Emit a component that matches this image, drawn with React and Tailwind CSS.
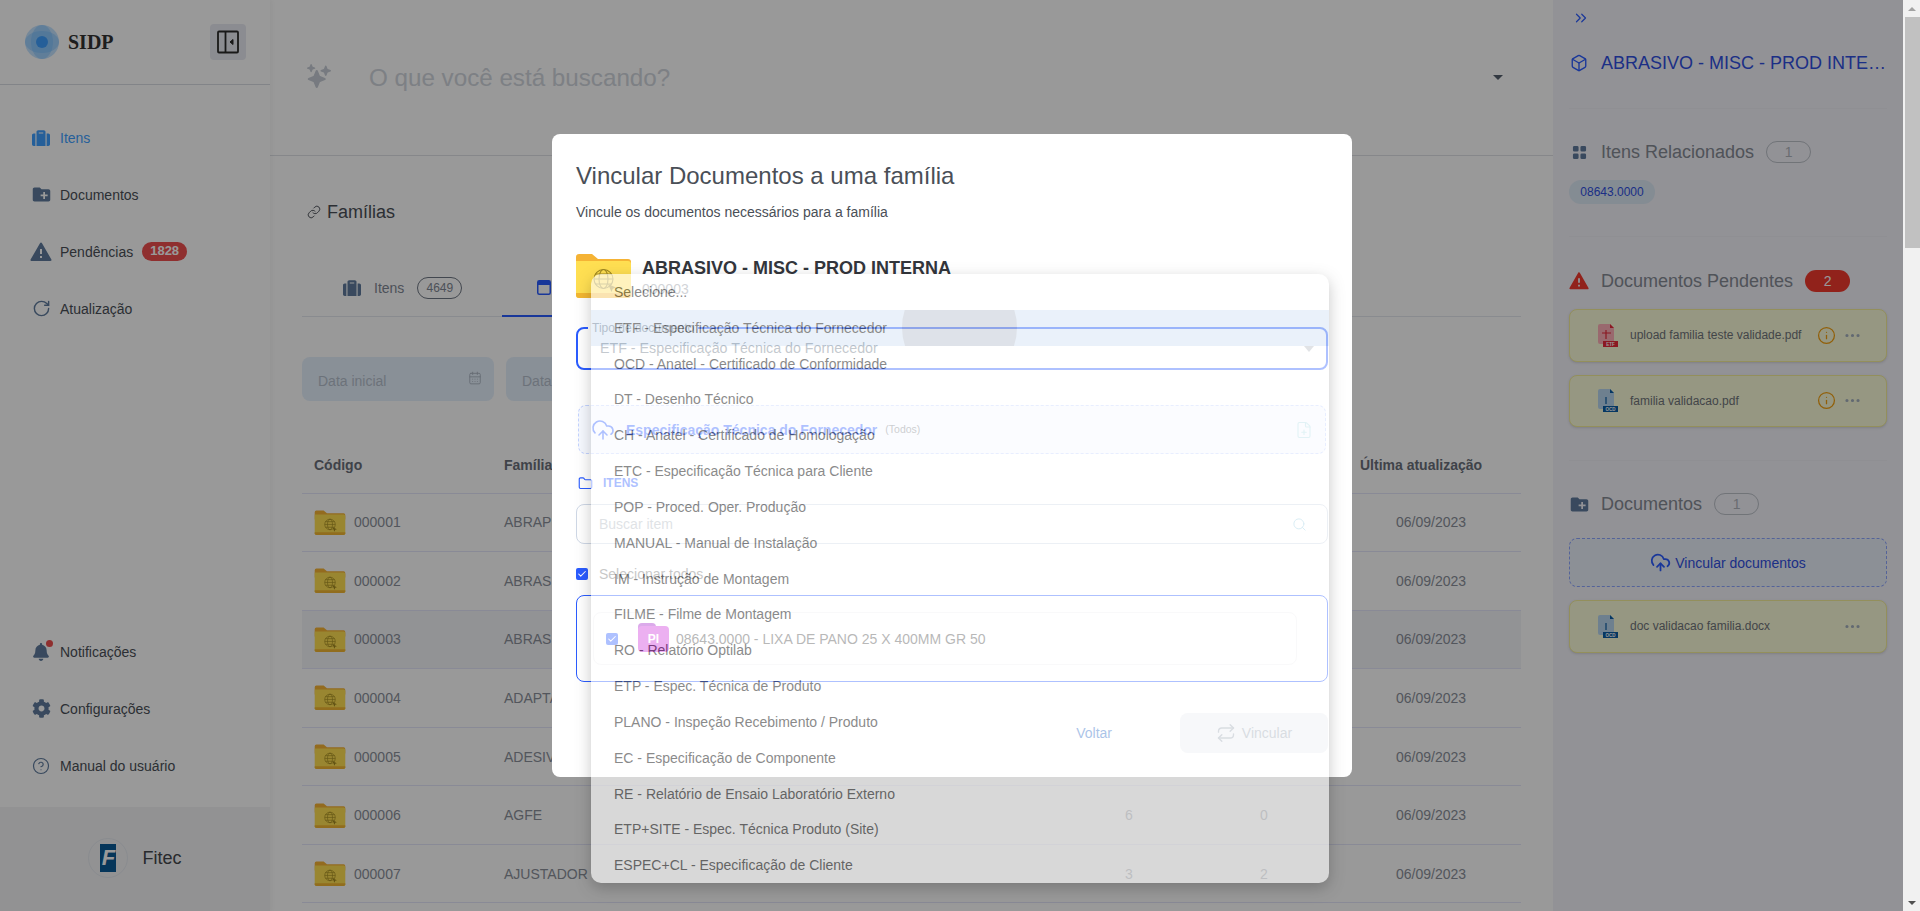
import {
  Box, Check, ChevronsRight, CircleHelp, CloudUpload, Ellipsis, FilePlus, Folder, Info, Link, Repeat, RotateCw, Search, CalendarDays,
} from "lucide-react";
import { FaBell, FaCog, FaSuitcase } from "react-icons/fa";
import { BsGridFill } from "react-icons/bs";
import { IoSparkles } from "react-icons/io5";
import { MdCreateNewFolder } from "react-icons/md";
import { RiAlertFill } from "react-icons/ri";

const rows = [
  ["000001", "ABRAPLAC", "4", "1"],
  ["000002", "ABRASIVO", "2", "0"],
  ["000003", "ABRASIVO - MISC - PROD INTERNA", "1", "1"],
  ["000004", "ADAPTADOR", "8", "3"],
  ["000005", "ADESIVO", "5", "1"],
  ["000006", "AGFE", "6", "0"],
  ["000007", "AJUSTADOR", "3", "2"],
];

const options = [
  "Selecione...",
  "ETF - Especificação Técnica do Fornecedor",
  "OCD - Anatel - Certificado de Conformidade",
  "DT - Desenho Técnico",
  "CH - Anatel - Certificado de Homologação",
  "ETC - Especificação Técnica para Cliente",
  "POP - Proced. Oper. Produção",
  "MANUAL - Manual de Instalação",
  "IM - Instrução de Montagem",
  "FILME - Filme de Montagem",
  "RO - Relatório Optilab",
  "ETP - Espec. Técnica de Produto",
  "PLANO - Inspeção Recebimento / Produto",
  "EC - Especificação de Componente",
  "RE - Relatório de Ensaio Laboratório Externo",
  "ETP+SITE - Espec. Técnica Produto (Site)",
  "ESPEC+CL - Especificação de Cliente",
];

function YellowFolder({ className }) {
  return (
    <svg viewBox="0 0 55 45" className={className}>
      <path d="M0 4a3 3 0 0 1 3-3h13l6 5h30a3 3 0 0 1 3 3v8H0z" fill="#f5b335" />
      <path d="M0 8h52a3 3 0 0 1 3 3v31a3 3 0 0 1-3 3H3a3 3 0 0 1-3-3z" fill="#ffdf52" />
      <path d="M0 40h55v2a3 3 0 0 1-3 3H3a3 3 0 0 1-3-3z" fill="#f2b632" />
      <g fill="none" stroke="#a08820" strokeWidth="1.1">
        <circle cx="27.5" cy="26" r="9.5" />
        <ellipse cx="27.5" cy="26" rx="4.5" ry="9.5" />
        <path d="M18 26h19M19 21h17M19 31h17" />
      </g>
      <path d="M32 31l8 3.5-3.2 1.2L35.5 39z" fill="#a08820" />
    </svg>
  );
}

function DocIcon({ page, tag, label, mark }) {
  return (
    <svg viewBox="0 0 20 23" className="w-5 h-[23px] shrink-0">
      <path d="M2 0h10l4 4v16H2a2 2 0 0 1-2-2V2a2 2 0 0 1 2-2z" fill={page} />
      <path d="M12 0l4 4h-4z" fill={tag} />
      <path d={mark} stroke={tag} strokeWidth="1.2" fill="none" />
      <rect x="5" y="17" width="15" height="6" fill={tag} />
      <text x="12.5" y="22" textAnchor="middle" fontSize="4.5" fontWeight="700" fill="#fff">{label}</text>
    </svg>
  );
}

function NavItem({ icon, children, active, badge }) {
  return (
    <div className={`h-[57px] pl-8 flex items-center gap-[10px] text-sm ${active ? "text-[#3f9fff]" : "text-[#4a4f57]"}`}>
      <span className={`w-[18px] flex justify-center [&>svg]:shrink-0 ${active ? "text-[#3f9fff]" : "text-[#5f7b9d]"}`}>{icon}</span>
      <span>{children}</span>
      {badge && (
        <span className="ml-[-1px] h-[19px] px-2 rounded-full bg-[#ef4f4f] text-white text-[13px] font-bold flex items-center">{badge}</span>
      )}
    </div>
  );
}

function Sidebar() {
  return (
    <aside className="w-[270px] shrink-0 h-full bg-white flex flex-col shadow-[2px_0_4px_rgba(0,0,0,0.04)] z-10">
      <div className="h-[85px] shrink-0 border-b border-[#d9dde3] pl-[25px] pr-6 flex items-center justify-between pb-[1px]">
        <div className="flex items-center gap-[9px]">
          <svg viewBox="0 0 34 36" className="w-[34px] h-9">
            <g fill="#6cb8ff" fillOpacity="0.4">
              <circle cx="17" cy="18" r="17" />
              <ellipse cx="17" cy="18" rx="11" ry="17" />
              <ellipse cx="17" cy="18" rx="17" ry="11" />
            </g>
            <circle cx="17" cy="18" r="6" fill="#3f9fff" />
          </svg>
          <span className="font-['Liberation_Serif',serif] font-bold text-xl text-[#333]">SIDP</span>
        </div>
        <div className="w-9 h-9 rounded bg-[#e8e9f2] flex items-center justify-center">
          <svg viewBox="0 0 24 24" className="w-6 h-6" fill="none" stroke="#2a2a2a" strokeWidth="1.8">
            <rect x="2" y="1.5" width="20" height="21" rx="1" />
            <path d="M9.5 1.5v21" />
            <path d="M17 9.5L14 12l3 2.5z" fill="#2a2a2a" strokeWidth="1" />
          </svg>
        </div>
      </div>
      <nav className="pt-[24px]">
        <NavItem active icon={<FaSuitcase size={18} />}>Itens</NavItem>
        <NavItem icon={<MdCreateNewFolder size={21} />}>Documentos</NavItem>
        <NavItem badge="1828" icon={<RiAlertFill size={24} />}>Pendências</NavItem>
        <NavItem icon={<RotateCw size={19} strokeWidth={1.8} />}>Atualização</NavItem>
      </nav>
      <div className="mt-auto pb-[13px]">
        <NavItem icon={
          <span className="relative">
            <FaBell size={18} />
            <span className="absolute -top-[3px] -right-[3px] w-[7px] h-[7px] rounded-full bg-[#ef4f4f]" />
          </span>
        }>Notificações</NavItem>
        <NavItem icon={<FaCog size={19} />}>Configurações</NavItem>
        <NavItem icon={<CircleHelp size={18} strokeWidth={1.6} />}>Manual do usuário</NavItem>
      </div>
      <div className="h-[104px] shrink-0 bg-[#f3f4f6] flex items-center justify-center gap-[14px] pb-[2px]">
        <div className="w-10 h-10 rounded-full border border-[#e6e9ef] flex items-center justify-center">
          <div className="w-4 h-7 bg-[#0b5a96] flex items-center justify-center text-white font-bold italic text-[22px] leading-none">F</div>
        </div>
        <span className="text-lg text-[#44474c]">Fitec</span>
      </div>
    </aside>
  );
}

function Main() {
  return (
    <main className="flex-1 min-w-0 h-full bg-white overflow-hidden">
      <div className="h-[156px] border-b border-[#dfe2e7] pl-[37px] pr-[50px] flex items-center pb-[1px]">
        <IoSparkles size={24} className="text-[#c6ccd5] mb-[3px]" />
        <span className="ml-[38px] mt-[3px] text-[24.2px] text-[#d0d5dd] flex-1">O que você está buscando?</span>
        <span className="w-0 h-0 border-x-[5px] border-x-transparent border-t-[5px] border-t-[#56606e]" />
      </div>
      <div className="px-8">
        <div className="mt-[42px] h-7 pl-[5px] flex items-center gap-[6px] text-lg text-[#4a4f57]">
          <Link size={14} strokeWidth={1.6} />
          <span>Famílias</span>
        </div>
        <div className="mt-[34px] h-[57px] flex border-b border-[#e5e8ee]">
          <div className="w-[200px] pl-[41px] flex items-center text-sm text-[#7f8794]">
            <FaSuitcase size={18} className="text-[#5f7b9d]" />
            <span className="ml-[13px]">Itens</span>
            <span className="ml-[13px] w-[45px] h-[22px] rounded-full border border-[#6f7784] flex items-center justify-center text-xs">4649</span>
          </div>
          <div className="w-[200px] pl-[35px] flex items-center text-sm text-[#2b5cff] border-b-2 border-[#2b5cff] mb-[-1px]">
            <svg viewBox="0 0 14 15" className="w-[14px] h-[15px]">
              <rect x="0.75" y="0.75" width="12.5" height="13.5" rx="1.5" fill="none" stroke="#2b5cff" strokeWidth="1.5" />
              <rect x="1" y="1" width="12" height="4" fill="#2b5cff" />
            </svg>
            <span className="ml-3">Famílias</span>
          </div>
        </div>
        <div className="mt-10 flex gap-3">
          {["Data inicial", "Data final"].map((d) => (
            <div key={d} className="w-[192px] h-[44px] rounded-lg bg-[#e5f0fc] pl-4 pr-3 flex items-center justify-between text-sm text-[#b5bfcc]">
              <span className="pt-[3px]">{d}</span>
              <CalendarDays size={14} strokeWidth={1.5} className="text-[#a9b3c0] mb-[3px]" />
            </div>
          ))}
        </div>
        <div className="mt-[35px] h-[57.5px] pt-[2px] grid grid-cols-[202px_559px_132px_138px_188px] items-center border-b border-[#e4e6fa] text-sm font-bold text-[#6a6f7a]">
          <span className="pl-3">Código</span>
          <span>Família</span>
          <span className="text-center">Itens</span>
          <span className="text-center">Pendências</span>
          <span className="pl-[27px]">Última atualização</span>
        </div>
        {rows.map((r) => (
          <div
            key={r[0]}
            className={`h-[58.57px] grid grid-cols-[202px_559px_132px_138px_188px] items-center border-b border-[#e4e6fa] text-sm text-[#8a8f9a] ${r[0] === "000003" ? "bg-[#f4f5f9]" : ""}`}
          >
            <span className="pl-3 flex items-center gap-2">
              <YellowFolder className="w-8 h-[25px]" />
              {r[0]}
            </span>
            <span>{r[1]}</span>
            <span className="text-center">{r[2]}</span>
            <span className="text-center">{r[3]}</span>
            <span className="pl-[63px]">06/09/2023</span>
          </div>
        ))}
      </div>
    </main>
  );
}

function SectionTitle({ icon, children, count, red }) {
  return (
    <div className="h-7 pl-[1px] flex items-center text-lg text-[#858a94]">
      <span className="w-[18px] flex justify-center [&>svg]:shrink-0">{icon}</span>
      <span className="ml-[13px]">{children}</span>
      <span className={`ml-3 w-[45px] h-[22px] rounded-full flex items-center justify-center text-sm ${red ? "bg-[#f2392d] text-white" : "border border-[#bcc1c9] text-[#b0b5bd]"}`}>
        {count}
      </span>
    </div>
  );
}

function DocCard({ name, doc, info, className }) {
  return (
    <div className={`h-[52.5px] rounded-lg bg-[#fafcd9] border border-[#f5ef9a] pl-7 pr-[24px] flex items-center shadow-sm ${className}`}>
      {doc}
      <span className="ml-3 flex-1 text-xs text-[#707479]">{name}</span>
      {info && <Info size={19} strokeWidth={1.6} className="text-[#f29f0f]" />}
      <Ellipsis size={19} strokeWidth={2} className="ml-[7px] text-[#a3afbd]" />
    </div>
  );
}

function RightPanel() {
  const etf = <DocIcon page="#ffb0b8" tag="#e8283a" label="ETF" mark="M8 6v9M4 9h9" />;
  const ocd = <DocIcon page="#b7d6ef" tag="#0a5ca3" label="OCD" mark="M8 8v7" />;
  return (
    <aside className="w-[350px] shrink-0 h-full bg-[#f3f3fa] px-4 overflow-hidden">
      <ChevronsRight size={18} strokeWidth={1.6} className="mt-[9px] ml-[3px] text-[#2b5cff]" />
      <div className="mt-[22px] h-7 pl-[1px] flex items-center text-lg text-[#2f4fe0]">
        <Box size={18} strokeWidth={1.8} className="shrink-0 text-[#2b5cff]" />
        <span className="ml-[13px] truncate">ABRASIVO - MISC - PROD INTERNA</span>
      </div>
      <div className="mt-[31px] h-px bg-[#eeeef5]" />
      <div className="mt-[29px]">
        <SectionTitle count="1" icon={<BsGridFill size={15} className="text-[#5f7b9d]" />}>Itens Relacionados</SectionTitle>
      </div>
      <div className="mt-[14px] w-[86px] h-6 rounded-full bg-[#dce9f5] flex items-center justify-center text-xs text-[#2f4fe0]">08643.0000</div>
      <div className="mt-[32px] h-px bg-[#eeeef5]" />
      <div className="mt-[30px]">
        <SectionTitle red count="2" icon={<RiAlertFill size={22} className="text-[#f2392d]" />}>Documentos Pendentes</SectionTitle>
      </div>
      <DocCard className="mt-[14px]" info name="upload familia teste validade.pdf" doc={etf} />
      <DocCard className="mt-[13px]" info name="familia validacao.pdf" doc={ocd} />
      <div className="mt-[33px] h-px bg-[#eeeef5]" />
      <div className="mt-[29px]">
        <SectionTitle count="1" icon={<MdCreateNewFolder size={21} className="text-[#5f7b9d]" />}>Documentos</SectionTitle>
      </div>
      <div className="mt-5 h-[49px] rounded-lg border border-dashed border-[#8da6ff] bg-[#eaf0fb] flex items-center justify-center gap-[4px] text-sm text-[#2f4fe0]">
        <CloudUpload size={21} strokeWidth={2} className="text-[#2b5cff]" />
        <span>Vincular documentos</span>
      </div>
      <DocCard className="mt-[13px]" name="doc validacao familia.docx" doc={ocd} />
    </aside>
  );
}

function Modal() {
  return (
    <div className="absolute left-[552px] top-[134px] w-[800px] h-[643px] bg-white rounded-lg px-6 pt-[26px] flex flex-col">
      <h2 className="text-2xl leading-8 text-[#4a4f57]">Vincular Documentos a uma família</h2>
      <p className="mt-[10px] text-sm leading-5 text-[#4a4f57]">Vincule os documentos necessários para a família</p>
      <div className="mt-[31px] h-[45px] flex">
        <YellowFolder className="w-[55px] h-[45px]" />
        <div className="ml-[11px]">
          <div className="text-lg leading-[30px] font-bold text-[#33363c]">ABRASIVO - MISC - PROD INTERNA</div>
          <div className="text-sm leading-[12px] text-[#8a8f98]">000003</div>
        </div>
      </div>
      <div className="relative mt-[29px] h-[43px] rounded-lg border-2 border-[#2b5cff] pl-[22px] pr-3 flex items-center justify-between text-[14.25px] text-[#647181]">
        <span className="absolute -top-[9px] left-[10px] bg-white px-1 text-xs text-[#707a88]">Tipo de documento</span>
        <span>ETF - Especificação Técnica do Fornecedor</span>
        <span className="w-0 h-0 border-x-[5px] border-x-transparent border-t-[6px] border-t-[#b0b6be]" />
      </div>
      <div className="mt-[35px] mx-[2px] h-[49px] rounded-lg border border-dashed border-[#c3d3ff] bg-[#f6f9ff] pl-[12px] pr-[12px] flex items-center text-sm">
        <CloudUpload size={24} strokeWidth={1.6} className="text-[#2b5cff]" />
        <span className="ml-[11px] font-bold text-[#2b5cff]">Especificação Técnica do Fornecedor</span>
        <span className="ml-[8px] text-[10.5px] text-[#7a7f88]">(Todos)</span>
        <FilePlus size={18} strokeWidth={1.5} className="ml-auto text-[#b3dfe8]" />
      </div>
      <div className="mt-[21px] h-4 pl-[2px] flex items-center gap-[10px] text-xs font-bold text-[#2b5cff]">
        <Folder size={15} strokeWidth={1.8} />
        <span>ITENS</span>
      </div>
      <div className="mt-[13px] h-10 rounded-lg border border-[#cfd8e6] pl-[22px] pr-[20px] flex items-center justify-between text-sm text-[#adb5bd]">
        <span>Buscar item</span>
        <Search size={15} strokeWidth={1.6} className="text-[#9fd2e6]" />
      </div>
      <div className="mt-5 h-5 flex items-center gap-[11px] text-sm text-[#6e6e6e]">
        <span className="w-3 h-3 bg-[#2b5cff] rounded-[2px] flex items-center justify-center">
          <Check size={10} strokeWidth={2.5} className="text-white" />
        </span>
        <span>Selecionar todos</span>
      </div>
      <div className="mt-[11px] h-[87px] rounded-lg border border-[#2b5cff] pl-4 pr-[30px] flex items-center">
        <div className="w-full h-[53px] rounded-lg border border-[#f1f1f4] pl-[12px] flex items-center text-sm text-[#444]">
          <span className="w-3 h-3 bg-[#2b5cff] rounded-[2px] flex items-center justify-center">
            <Check size={10} strokeWidth={2.5} className="text-white" />
          </span>
          <div className="ml-5 relative w-[31px] h-[29px] mb-[3px]">
            <div className="absolute left-0 top-0 w-[18px] h-2 rounded-t bg-[#a020c8]" />
            <div className="absolute left-0 top-[3px] w-full h-[26px] rounded bg-[#cf30dc] flex items-center justify-center text-white text-xs font-bold">PI</div>
          </div>
          <span className="ml-[7px]">08643.0000 - LIXA DE PANO 25 X 400MM GR 50</span>
        </div>
      </div>
      <div className="mt-[31px] flex items-center justify-end gap-[68px] text-sm">
        <span className="text-[#1d64c3]">Voltar</span>
        <div className="w-[148px] h-10 rounded-lg bg-[#eaedf2] flex items-center justify-center gap-[6px] text-[#9ba6b3]">
          <Repeat size={20} strokeWidth={1.6} />
          <span>Vincular</span>
        </div>
      </div>
    </div>
  );
}

function Dropdown() {
  return (
    <div className="absolute left-[591px] top-[274px] w-[738px] h-[609px] rounded-[10px] bg-white opacity-[0.62] overflow-hidden shadow-[0_5px_15px_rgba(0,0,0,0.35)]">
      {options.map((o, i) => (
        <div key={o} className={`relative h-[35.83px] pl-[23px] flex items-center text-sm text-[#444] overflow-hidden ${i === 1 ? "bg-[#deeaf7]" : ""}`}>
          {i === 1 && <span className="absolute left-[311px] top-[-40px] w-[115px] h-[115px] rounded-full bg-[#cbd1dc]" />}
          <span className="relative">{o}</span>
        </div>
      ))}
    </div>
  );
}

function Scrollbar() {
  return (
    <div className="w-[17px] shrink-0 h-full bg-[#f1f1f1] flex flex-col items-center">
      <div className="h-[17px] flex items-center justify-center">
        <span className="w-0 h-0 border-x-[4px] border-x-transparent border-b-[4px] border-b-[#a3a3a3]" />
      </div>
      <div className="w-[15px] ml-[1px] h-[231px] bg-[#c1c1c1]" />
      <div className="mt-auto h-[17px] flex items-center justify-center">
        <span className="w-0 h-0 border-x-[4px] border-x-transparent border-t-[4px] border-t-[#505050]" />
      </div>
    </div>
  );
}

export default function App() {
  return (
    <div className="w-[1920px] h-[911px] flex overflow-hidden font-['Liberation_Sans',sans-serif]">
      <div className="relative w-[1903px] h-full flex">
        <Sidebar />
        <Main />
        <RightPanel />
        <div className="absolute inset-0 z-20 bg-black/40" />
        <div className="absolute inset-0 z-30">
          <Modal />
          <Dropdown />
        </div>
      </div>
      <Scrollbar />
    </div>
  );
}
